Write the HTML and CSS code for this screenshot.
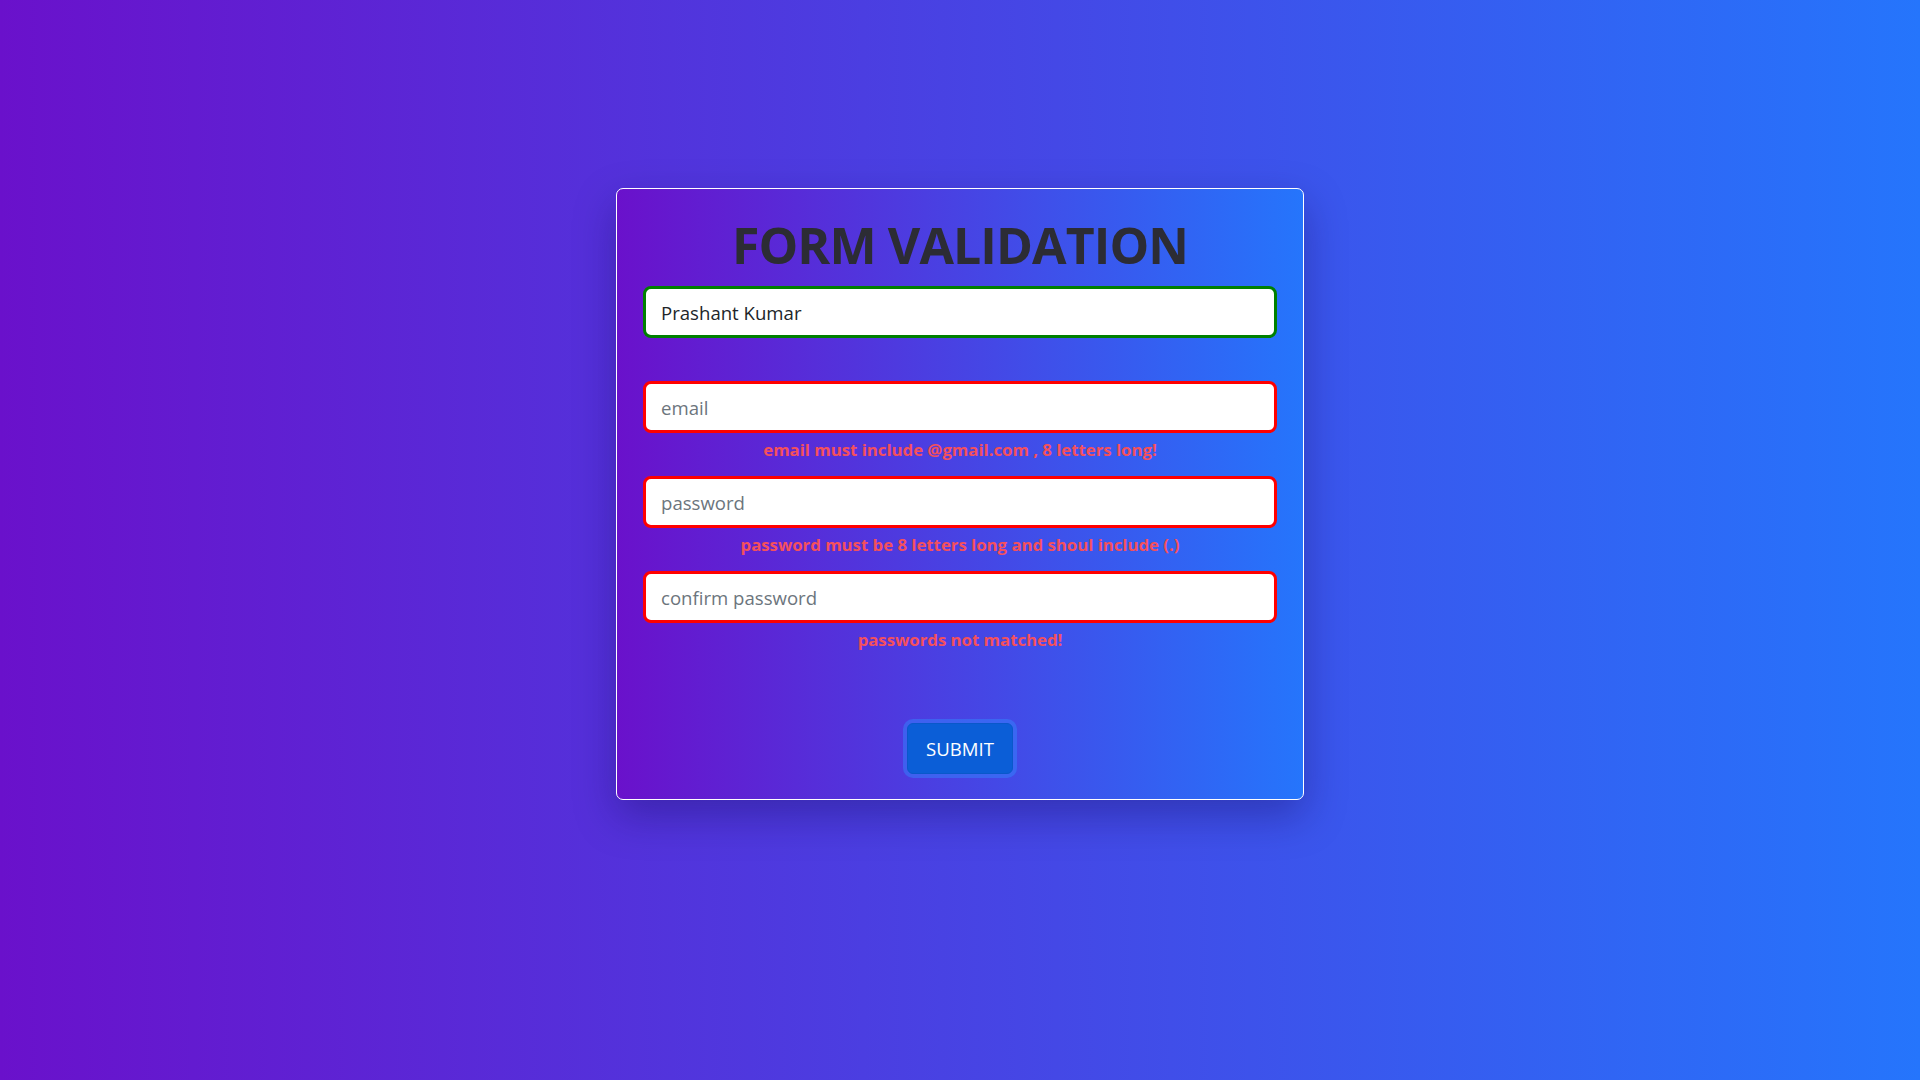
FILE: index.html
```html
<!DOCTYPE html>
<html lang="en">
<head>
<meta charset="utf-8">
<title>Form Validation</title>
<link rel="stylesheet" href="styles.css">
</head>
<body>
<main class="page">
  <form class="card" onsubmit="return false;">
    <h1 class="title">FORM VALIDATION</h1>
    <div class="field">
      <input class="input valid" type="text" value="Prashant Kumar" placeholder="name">
      <small class="error"></small>
    </div>
    <div class="field">
      <input class="input invalid" type="text" placeholder="email">
      <small class="error">email must include @gmail.com , 8 letters long!</small>
    </div>
    <div class="field">
      <input class="input invalid" type="password" placeholder="password">
      <small class="error">password must be 8 letters long and shoul include (.)</small>
    </div>
    <div class="field">
      <input class="input invalid" type="password" placeholder="confirm password">
      <small class="error">passwords not matched!</small>
    </div>
    <div class="actions">
      <button class="btn" type="submit">SUBMIT</button>
    </div>
  </form>
</main>
</body>
</html>
```
FILE: styles.css
```css
* { box-sizing: border-box; }
html, body { margin: 0; padding: 0; }
body {
  min-height: 100vh;
  background: linear-gradient(to right, #6a11cb, #2575fc);
  font-family: "Open Sans", "Noto Sans", sans-serif;
}
.page {
  display: flex;
  justify-content: center;
  padding-top: 188px;
  min-height: 100vh;
}
.card {
  width: 688px;
  height: 612px;
  padding: 0 26px;
  border: 1px solid #ffffff;
  border-radius: 7px;
  background: linear-gradient(to right, #6a11cb, #2575fc);
  box-shadow: 0 16px 40px rgba(20, 10, 90, 0.35);
  display: flex;
  flex-direction: column;
}
.title {
  margin: 26px 0 0;
  height: 71px;
  line-height: 60px;
  text-align: center;
  font-size: 50px;
  font-weight: 700;
  color: #2c2c34;
  letter-spacing: -0.9px;
}
.field {
  display: flex;
  flex-direction: column;
  height: 95px;
}
.input {
  width: 100%;
  height: 52px;
  padding: 0 15px;
  border: 3px solid #ff0000;
  border-radius: 8px;
  background: #ffffff;
  font-family: inherit;
  font-size: 18.6px;
  color: #212529;
  outline: none;
}
.input::placeholder { color: #6c757d; }
.input.valid { border-color: #008000; }
.input.invalid { border-color: #ff0000; }
.error {
  margin-top: 4px;
  height: 26px;
  line-height: 26px;
  text-align: center;
  font-size: 16.75px;
  font-weight: 700;
  color: #f4505c;
}
.actions {
  display: flex;
  justify-content: center;
  padding-top: 57px;
}
.btn {
  height: 51px;
  padding: 0 18px;
  border: 1px solid #0a58ca;
  border-radius: 6px;
  background: #0b5ed7;
  color: #ffffff;
  font-family: inherit;
  font-size: 18.6px;
  box-shadow: 0 0 0 4px rgba(49, 132, 253, 0.5);
  cursor: pointer;
}
```
